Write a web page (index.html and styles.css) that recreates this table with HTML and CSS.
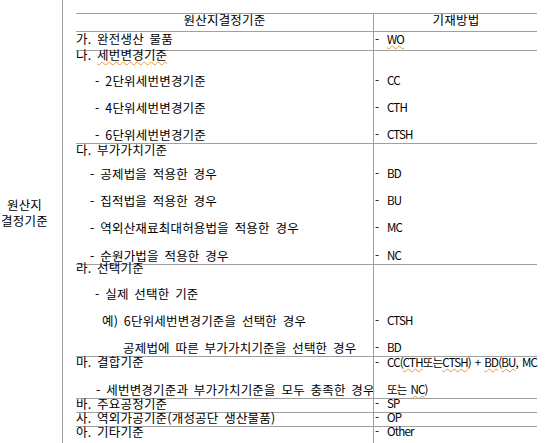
FILE: index.html
```html
<!DOCTYPE html>
<html lang="ko">
<head>
<meta charset="utf-8">
<title>원산지결정기준</title>
<link rel="stylesheet" href="styles.css">
</head>
<body>
<div class="page">
  <div class="side">
    <div class="side-line">원산지</div>
    <div class="side-line">결정기준</div>
  </div>
  <div class="table">
    <div class="row">
      <div class="c1 center"><div class="hd">원산지결정기준</div></div>
      <div class="c2 center"><div class="hd">기재방법</div></div>
    </div>
    <div class="row">
      <div class="c1"><div class="l18">가. 완전생산 물품</div></div>
      <div class="c2"><div class="l18"><span class="dash">-</span><span class="sp">WO</span></div></div>
    </div>
    <div class="row">
      <div class="c1">
        <div class="f11">나. <span class="sp">세번변경기준</span></div>
        <div class="sub i19">- 2단위세번변경기준</div>
        <div class="sub i19">- 4단위세번변경기준</div>
        <div class="sub i19">- 6단위세번변경기준</div>
      </div>
      <div class="c2">
        <div class="f11">&nbsp;</div>
        <div class="sub"><span class="dash">-</span>CC</div>
        <div class="sub"><span class="dash">-</span>CTH</div>
        <div class="sub"><span class="dash">-</span>CTSH</div>
      </div>
    </div>
    <div class="row">
      <div class="c1">
        <div class="f15">다. 부가가치기준</div>
        <div class="sub10 i14">- 공제법을 적용한 경우</div>
        <div class="sub i14">- 집적법을 적용한 경우</div>
        <div class="sub i14">- 역외산재료최대허용법을 적용한 경우</div>
        <div class="sub15 i14">- 순원가법을 적용한 경우</div>
      </div>
      <div class="c2">
        <div class="f15">&nbsp;</div>
        <div class="sub10"><span class="dash">-</span>BD</div>
        <div class="sub"><span class="dash">-</span>BU</div>
        <div class="sub"><span class="dash">-</span>MC</div>
        <div class="sub15"><span class="dash">-</span>NC</div>
      </div>
    </div>
    <div class="row">
      <div class="c1">
        <div class="f10">라. 선택기준</div>
        <div class="sub i19">- 실제 선택한 기준</div>
        <div class="sub i26">예) 6단위세번변경기준을 선택한 경우</div>
        <div class="sub i47">공제법에 따른 부가가치기준을 선택한 경우</div>
      </div>
      <div class="c2">
        <div class="f10">&nbsp;</div>
        <div class="sub">&nbsp;</div>
        <div class="sub"><span class="dash">-</span>CTSH</div>
        <div class="sub"><span class="dash">-</span>BD</div>
      </div>
    </div>
    <div class="row">
      <div class="c1">
        <div class="f14">마. 결합기준</div>
        <div class="sub i20">- 세번변경기준과 부가가치기준을 모두 충족한 경우</div>
      </div>
      <div class="c2">
        <div class="f14"><span class="dash">-</span>CC(<span class="sp">CTH</span>또는<span class="sp">CTSH</span>) + <span class="sp">BD</span>(<span class="sp">BU</span>, MC</div>
        <div class="sub i12">또는 <span class="sp">NC</span>)</div>
      </div>
    </div>
    <div class="row">
      <div class="c1"><div class="f13">바. 주요공정기준</div></div>
      <div class="c2"><div class="f13"><span class="dash">-</span>SP</div></div>
    </div>
    <div class="row">
      <div class="c1"><div class="f13">사. 역외가공기준(개성공단 생산물품)</div></div>
      <div class="c2"><div class="f13"><span class="dash">-</span>OP</div></div>
    </div>
    <div class="row last">
      <div class="c1"><div class="f13">아. 기타기준</div></div>
      <div class="c2"><div class="f13"><span class="dash">-</span>Other</div></div>
    </div>
  </div>
</div>
</body>
</html>
```

FILE: styles.css
```css
html, body {
  margin: 0;
  padding: 0;
  background: #ffffff;
}

body {
  font-family: "Noto Sans CJK KR", "Noto Sans", sans-serif;
  font-size: 12.5px;
  color: #000000;
  letter-spacing: 0.2px;
  word-spacing: 2px;
}

.page {
  display: flex;
  height: 443px;
  overflow: hidden;
}

.side {
  width: 63px;
  box-sizing: border-box;
  border-right: 1px solid #a0a0a0;
  padding-top: 197px;
  padding-right: 13px;
  text-align: center;
  line-height: 16px;
}

.table {
  margin-left: 13px;
  margin-top: 13px;
  width: 461px;
  display: flex;
  flex-direction: column;
}

.row {
  display: flex;
  border-top: 1px solid #a0a0a0;
}

.row.last {
  flex: 1;
}

.c1 {
  width: 297px;
  white-space: nowrap;
}

.c2 {
  flex: 1;
  border-left: 1px solid #a0a0a0;
  padding-left: 1px;
  white-space: nowrap;
  font-size: 11.5px;
  letter-spacing: -0.8px;
  word-spacing: 1.5px;
}

.c2.center {
  font-size: 12.5px;
  letter-spacing: 0.2px;
}

.dash {
  display: inline-block;
  width: 12px;
  letter-spacing: 0;
}

.c1 > div,
.c2 > div {
  padding-bottom: 4px;
}

.center {
  text-align: center;
}

.c1 > .hd,
.c2 > .hd {
  line-height: 11px;
  padding-bottom: 6px;
}

.l18 { line-height: 14px; }
.f10 { line-height: 6px; }
.f11 { line-height: 7px; }
.f13 { line-height: 9px; }
.f14 { line-height: 10px; }
.f15 { line-height: 11px; }

.sub {
  padding-top: 14px;
  line-height: 9px;
}

.sub10 {
  padding-top: 10px;
  line-height: 9px;
}

.sub15 {
  padding-top: 15px;
  line-height: 9px;
}

.i12 { padding-left: 12px; }
.i14 { padding-left: 14px; }
.i19 { padding-left: 19px; }
.i20 { padding-left: 20px; }
.i26 { padding-left: 26px; }
.i47 { padding-left: 47px; }

.sp {
  text-decoration: underline wavy #f0962a;
  text-decoration-thickness: 1px;
  text-underline-offset: 1px;
}
```
